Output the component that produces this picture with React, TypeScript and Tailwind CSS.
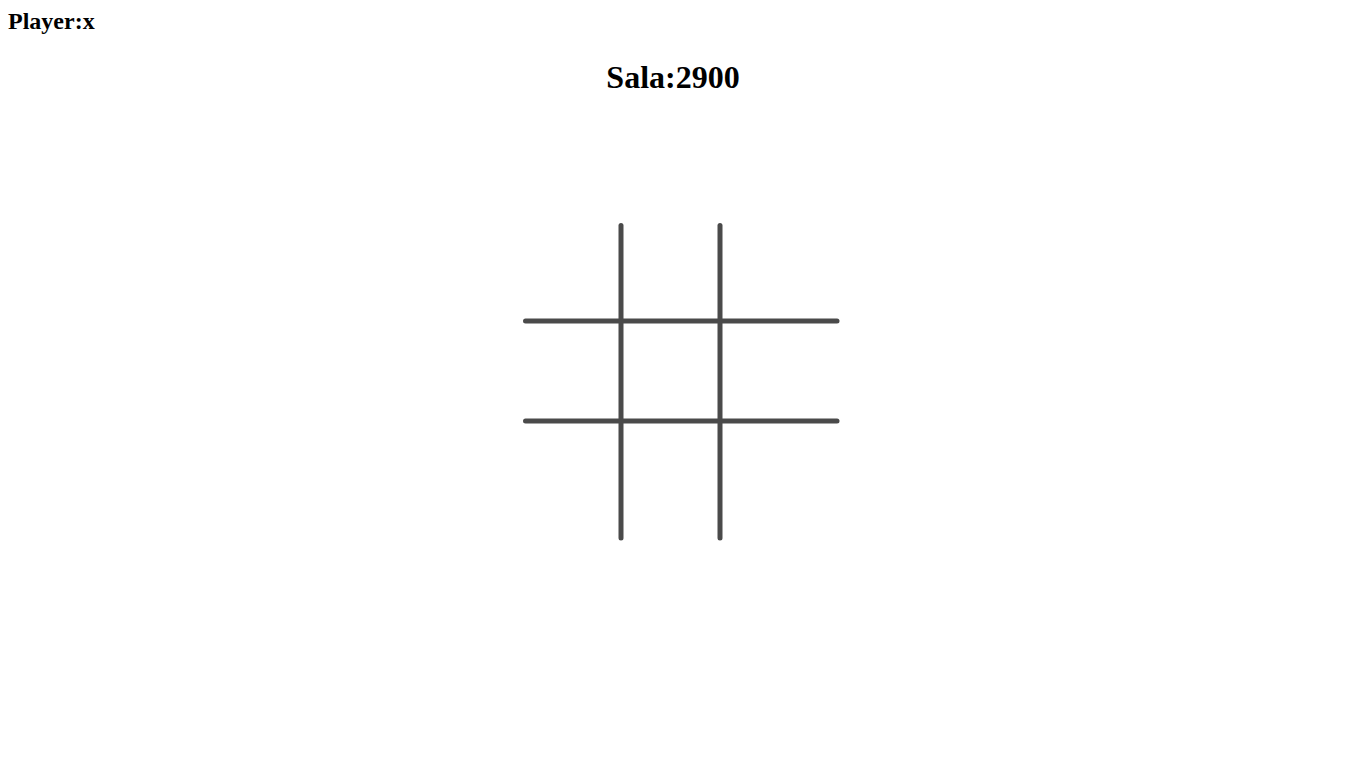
export default function App() {
  return (
    <div className="min-h-screen bg-white p-2 text-black" style={{ fontFamily: '"Liberation Serif", "Times New Roman", serif' }}>
      <div className="text-[24px] font-bold leading-[27px]">Player:x</div>
      <h1 className="mt-[24px] pr-[20px] text-center text-[32px] font-bold leading-[36px]">Sala:2900</h1>
      <div className="mt-[124px] flex justify-center">
        <svg width="330" height="330" viewBox="0 0 330 330">
          <g stroke="#4a4a4a" strokeWidth="5" strokeLinecap="round">
            <line x1="103" y1="6.5" x2="103" y2="319" />
            <line x1="202" y1="6.5" x2="202" y2="319" />
            <line x1="7.5" y1="102" x2="319" y2="102" />
            <line x1="7.5" y1="202" x2="319" y2="202" />
          </g>
        </svg>
      </div>
    </div>
  );
}
